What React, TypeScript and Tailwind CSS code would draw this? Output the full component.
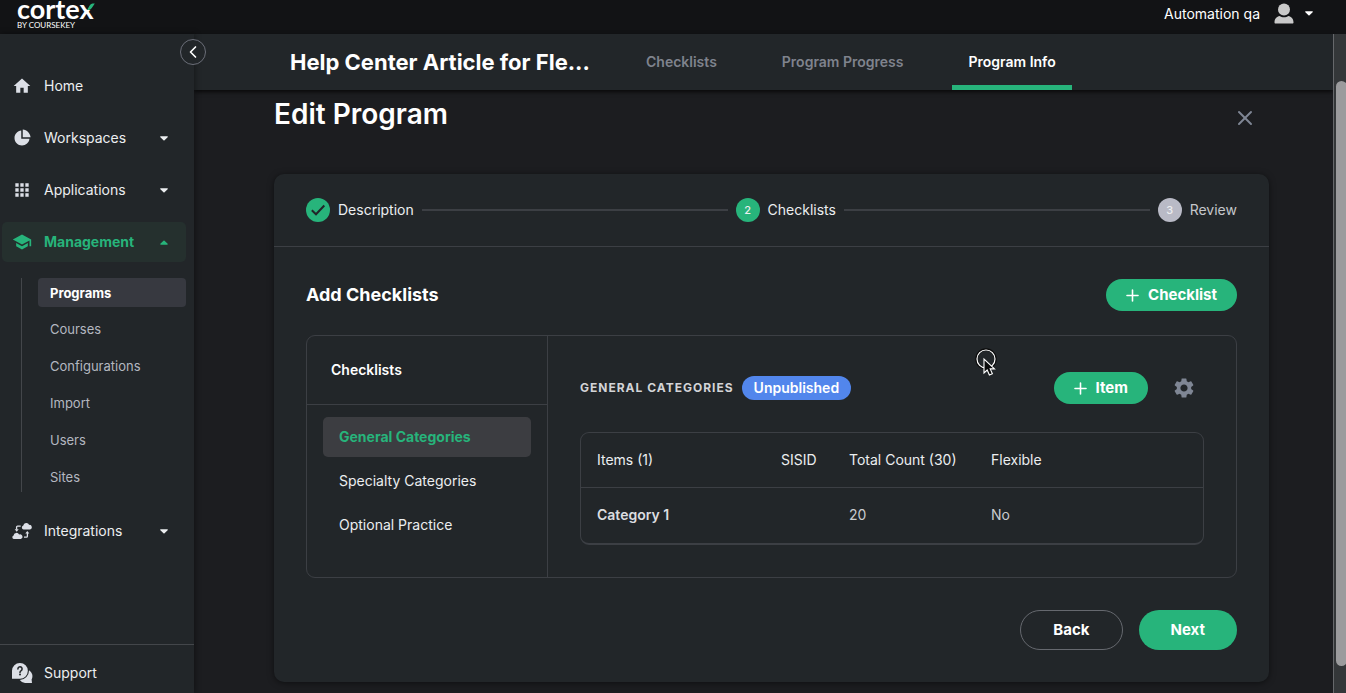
import { MdHome, MdApps, MdSchool, MdSettings } from "react-icons/md";
import { RiPieChart2Fill } from "react-icons/ri";
import { Plus, X, ChevronLeft } from "lucide-react";
import type { ReactNode } from "react";

function Caret({ up = false }: { up?: boolean }) {
  return (
    <svg viewBox="0.5 0.3 9 5.6" className={up ? "mr-px h-[5px] w-2 rotate-180" : "mr-px h-[5px] w-2"} fill="currentColor" aria-hidden="true">
      <path d="M1.4 0.6h7.2c.6 0 .9.7.5 1.1L5.6 5.2a.9.9 0 0 1-1.2 0L.9 1.7C.5 1.3.8.6 1.4.6z" />
    </svg>
  );
}

function CloudSync() {
  return (
    <svg viewBox="0 0 20 16" className="h-4 w-5" aria-hidden="true">
      <g fill="currentColor">
        <path d="M11.6 6.5a2 2 0 0 1-.3-3.9 3.1 3.1 0 0 1 5.9-.7 2.3 2.3 0 0 1 .9 4.5z" />
        <path d="M1.8 16a1.8 1.8 0 0 1-.2-3.5 2.9 2.9 0 0 1 5.5-1A2.3 2.3 0 0 1 8.9 16z" />
        <path d="M2.7 6.2h4L4.7 8.7zM13.3 10.6h4l-2-2.5z" />
      </g>
      <path d="M8.7 3.1H5.6a1 1 0 0 0-1 1v2.4M12 14.2h2.4a1 1 0 0 0 1-1V10" fill="none" stroke="currentColor" strokeWidth="1.3" />
    </svg>
  );
}

function SupportIcon() {
  return (
    <svg viewBox="0 0 22 22" className="h-[22px] w-[22px]" aria-hidden="true">
      <path d="M18 8.2a7 7 0 0 1 2.6 9.3l.4 3.5H14A7 7 0 0 1 8.8 18 9.6 9.6 0 0 0 18 8.2z" fill="currentColor" />
      <path d="M9 1a7.8 7.8 0 1 1 0 15.7H1V8.8A7.8 7.8 0 0 1 9 1z" fill="currentColor" />
      <path d="M6.9 6.9a2.1 2.1 0 1 1 3.3 1.7c-.8.5-1.2.9-1.2 1.8" fill="none" stroke="#222629" strokeWidth="1.5" strokeLinecap="round" />
      <circle cx="9" cy="12.6" r="1" fill="#222629" />
    </svg>
  );
}

function NavItem({ icon, label, caret, active = false }: { icon: ReactNode; label: string; caret?: "up" | "down"; active?: boolean }) {
  return (
    <button
      type="button"
      className={
        active
          ? "flex h-10 w-full items-center rounded-[5px] bg-[#25302e] pr-[17px] pl-2 font-bold text-[#27b47b]"
          : "flex h-10 w-full items-center rounded-[5px] pr-[17px] pl-2 text-[#eceef0]"
      }
    >
      <span className={active ? "flex w-6 justify-center" : "flex w-6 justify-center text-[#dcdfe6]"}>{icon}</span>
      <span className="ml-[10px] flex-1 text-left">{label}</span>
      {caret && <Caret up={caret === "up"} />}
    </button>
  );
}

const subItems = ["Programs", "Courses", "Configurations", "Import", "Users", "Sites"];

function Sidebar() {
  return (
    <aside className="relative z-20 flex w-[194px] shrink-0 flex-col bg-[#222629] shadow-[1px_0_6px_rgba(0,0,0,0.4)]">
      <button
        type="button"
        aria-label="Collapse menu"
        className="absolute top-[5px] -right-3 flex size-[26px] items-center justify-center rounded-full border border-[#6b6e78] bg-[#222629] text-white"
      >
        <ChevronLeft size={20} strokeWidth={2} />
      </button>
      <nav className="flex flex-1 flex-col gap-3 pt-8 pr-2 pl-[2px]">
        <NavItem icon={<MdHome size={20} />} label="Home" />
        <NavItem icon={<RiPieChart2Fill size={18} />} label="Workspaces" caret="down" />
        <NavItem icon={<MdApps size={20} />} label="Applications" caret="down" />
        <NavItem icon={<MdSchool size={20} />} label="Management" caret="up" active />
        <ul className="mt-1 mb-[7px] ml-[19px] flex flex-col gap-2 border-l border-[#43464a] pl-4 text-[13px] text-[#b4b8c0]">
          {subItems.map((name, i) => (
            <li key={name}>
              <a
                href="#"
                className={
                  i === 0
                    ? "flex h-[29px] items-center rounded-[4px] bg-[#373940] pl-3 font-bold text-white"
                    : "flex h-[29px] items-start pt-1 pl-3"
                }
              >
                {name}
              </a>
            </li>
          ))}
        </ul>
        <NavItem icon={<CloudSync />} label="Integrations" caret="down" />
      </nav>
      <div className="border-t border-[#43464a] pt-2 pl-[2px]">
        <NavItem icon={<SupportIcon />} label="Support" />
      </div>
    </aside>
  );
}

function Header() {
  return (
    <header className="flex h-[34px] shrink-0 items-start justify-between bg-[#121315] pr-8 pl-[17px]">
      <div className="flex flex-col font-['Lato',sans-serif] text-white">
        <div className="relative text-[27px] leading-[18px] font-bold">
          cortex
          <svg viewBox="0 0 8 7" className="absolute top-[3px] -right-px h-[7px] w-2" aria-hidden="true">
            <path d="M0 7V0h8v7z" fill="#121315" />
            <path d="M0 7 3 2Q4 .5 5.600.5H7.800L4.800 5Q3.800 6.600 2 7z" fill="#27b47b" />
          </svg>
        </div>
        <div className="mt-[3px] text-[8px] leading-2">BY COURSEKEY</div>
      </div>
      <button type="button" className="mt-[3px] flex items-center text-white">
        <span>Automation qa</span>
        <svg viewBox="0 0 20 21" className="ml-[14px] h-[21px] w-5" fill="#c9c9c9" aria-hidden="true">
          <circle cx="10" cy="6.5" r="6" />
          <path d="M.5 19.5C.5 15.5 3 13.5 5.5 13c2.5 1.7 6.5 1.7 9 0 2.5.5 5 2.5 5 6.5 0 .6-.4 1-1 1h-17c-.6 0-1-.4-1-1z" />
        </svg>
        <span className="ml-[11px]">
          <Caret />
        </span>
      </button>
    </header>
  );
}

function TabBar() {
  return (
    <div className="relative z-10 flex h-14 shrink-0 gap-8 bg-[#222629] pl-24 shadow-[0_2px_4px_rgba(0,0,0,0.7)]">
      <h1 className="flex w-[308px] items-center text-[22px] font-bold whitespace-nowrap text-white">Help Center Article for Fle...</h1>
      <nav className="flex gap-[33px] text-[#7f838d]">
        <a href="#" className="flex items-center px-4 font-semibold">Checklists</a>
        <a href="#" className="flex items-center px-4 font-semibold">Program Progress</a>
        <a href="#" className="flex items-center border-y-[5px] border-t-transparent border-b-[#27b47b] px-4 font-semibold text-white">
          Program Info
        </a>
      </nav>
    </div>
  );
}

function Stepper() {
  return (
    <ol className="flex h-[73px] items-center gap-2 border-b border-[#3c3f44] px-8 text-[#eceef0]">
      <li className="flex items-center gap-2">
        <span className="flex size-6 items-center justify-center rounded-full bg-[#27b47b]">
          <svg viewBox="0 0 16 16" className="size-4" fill="none" stroke="#222629" strokeWidth="2" aria-hidden="true">
            <path d="M1.8 8.3 6 12.3 14.3 3.5" />
          </svg>
        </span>
        Description
      </li>
      <li aria-hidden="true" className="h-[2px] flex-1 bg-[#3c3f44]" />
      <li className="flex items-center gap-2">
        <span className="flex size-6 items-center justify-center rounded-full bg-[#27b47b] text-[11px] font-medium">2</span>
        Checklists
      </li>
      <li aria-hidden="true" className="h-[2px] flex-1 bg-[#3c3f44]" />
      <li className="flex items-center gap-2 text-[#c5c7cb]">
        <span className="flex size-6 items-center justify-center rounded-full bg-[#b9bac6] text-[11px] font-medium text-[#eceef0]">3</span>
        Review
      </li>
    </ol>
  );
}

function AddButton({ label }: { label: string }) {
  return (
    <button type="button" className="flex h-8 items-center gap-[6px] rounded-full bg-[#27b47b] pr-5 pl-[17px] text-[15px] font-bold text-white">
      <Plus size={19} strokeWidth={2} />
      {label}
    </button>
  );
}

const checklists = ["General Categories", "Specialty Categories", "Optional Practice"];

function ChecklistPanel() {
  return (
    <div className="mt-6 flex rounded-[9px] border border-[#3c3f44]">
      <div className="w-[241px] shrink-0 border-r border-[#3c3f44]">
        <h3 className="flex h-[69px] items-center border-b border-[#3c3f44] pl-6 font-semibold text-white">Checklists</h3>
        <ul className="flex flex-col gap-1 px-4 py-3">
          {checklists.map((name, i) => (
            <li key={name}>
              <button
                type="button"
                className={
                  i === 0
                    ? "flex h-10 w-full items-center rounded-[5px] bg-[#3c3d41] pl-4 font-bold text-[#27b47b]"
                    : "flex h-10 w-full items-center pl-4 text-[#eceef0]"
                }
              >
                {name}
              </button>
            </li>
          ))}
        </ul>
      </div>
      <div className="relative flex-1 px-8 pt-9 pb-8">
        <div className="flex items-center">
          <h3 className="text-[12px] font-bold tracking-[1px] text-[#d3d4d7] uppercase">General Categories</h3>
          <span className="ml-2 flex h-6 items-center rounded-full bg-[#5286ec] px-3 font-semibold text-white">Unpublished</span>
          <div className="ml-auto flex items-center gap-6">
            <AddButton label="Item" />
            <button type="button" aria-label="Checklist settings" className="mr-2 text-[#7f8694]">
              <MdSettings size={24} />
            </button>
          </div>
        </div>
        <div className="mt-7 overflow-hidden rounded-[9px] border border-b-2 border-[#3c3f44]">
          <table className="w-full table-fixed text-left">
            <colgroup>
              <col className="w-[184px]" />
              <col className="w-[68px]" />
              <col className="w-[142px]" />
              <col />
            </colgroup>
            <thead>
              <tr className="h-[54px] border-b border-[#3c3f44] whitespace-nowrap text-[#eceef0]">
                <th className="pl-4 font-normal">Items (1)</th>
                <th className="pl-4 font-normal">SISID</th>
                <th className="pl-4 font-normal">Total Count (30)</th>
                <th className="pl-4 font-normal">Flexible</th>
              </tr>
            </thead>
            <tbody>
              <tr className="h-14 text-[#c9cbcf]">
                <td className="pl-4 font-semibold text-[#dcdde0]">Category 1</td>
                <td />
                <td className="pl-4">20</td>
                <td className="pl-4">No</td>
              </tr>
            </tbody>
          </table>
        </div>
        <svg viewBox="0 0 22 30" className="absolute top-3 left-[427px] h-[30px] w-[22px]" aria-hidden="true">
          <circle cx="11" cy="11" r="9.5" fill="#222629" stroke="#0a0a0a" strokeWidth="2.5" />
          <circle cx="11" cy="11" r="9" fill="none" stroke="#fff" strokeWidth="1.2" />
          <path d="M9 11v14l3.2-3 2.2 5 3-1.3-2.2-4.8h4.3z" fill="#0a0a0a" stroke="#fff" strokeWidth="1.1" />
        </svg>
      </div>
    </div>
  );
}

export default function App() {
  return (
    <div className="flex h-screen flex-col overflow-hidden bg-[#1c1d20] font-['Inter',sans-serif] text-[14px] leading-5">
      <Header />
      <div className="flex min-h-0 flex-1">
        <Sidebar />
        <div className="flex min-w-0 flex-1 flex-col">
          <TabBar />
          <main className="flex-1 overflow-hidden pr-16 pb-[11px] pl-20">
            <div className="flex items-center justify-between pt-2 pr-3">
              <h2 className="text-[28px] leading-8 font-semibold text-white">Edit Program</h2>
              <button type="button" aria-label="Close" className="mt-2 text-[#7f8694]">
                <X size={24} strokeWidth={2} />
              </button>
            </div>
            <section className="mt-11 rounded-[10px] bg-[#222629] shadow-[0_1px_6px_rgba(0,0,0,0.5)]">
              <Stepper />
              <div className="p-8">
                <div className="flex items-center justify-between">
                  <h3 className="text-[18px] font-bold text-white">Add Checklists</h3>
                  <AddButton label="Checklist" />
                </div>
                <ChecklistPanel />
                <div className="mt-8 flex justify-end gap-4 text-[15px] font-bold text-white">
                  <button type="button" className="h-10 rounded-full border border-[#66696f] px-8">Back</button>
                  <button type="button" className="h-10 rounded-full bg-[#27b47b] px-8">Next</button>
                </div>
              </div>
            </section>
          </main>
        </div>
        <div className="relative z-20 w-[13px] shrink-0 overflow-hidden border-l border-[#66686b] bg-[#343739] pt-[47px] pb-[27px] pl-[2px]" aria-hidden="true">
          <div className="h-full w-[11px] rounded-full bg-[#9b9b9d]" />
        </div>
      </div>
    </div>
  );
}
